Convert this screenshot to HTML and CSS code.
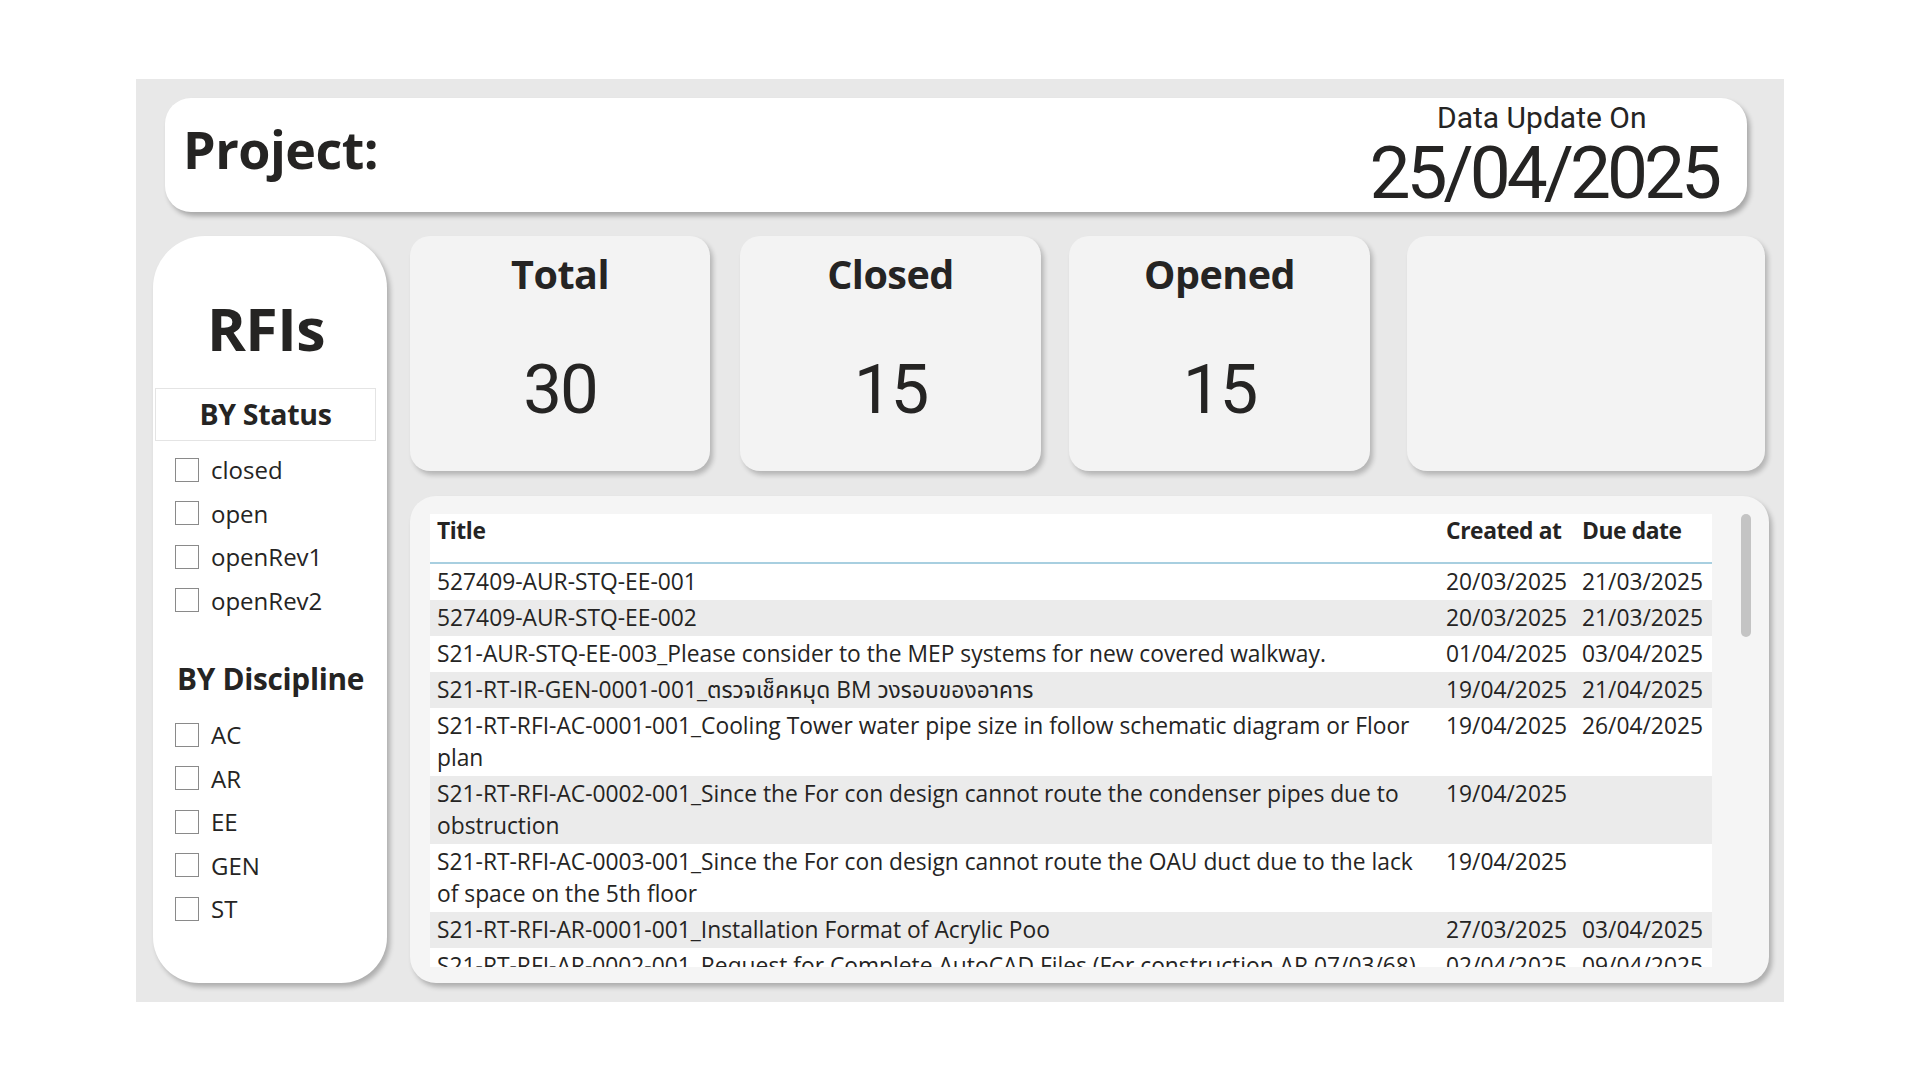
FILE: index.html
```html
<!DOCTYPE html>
<html lang="en">
<head>
<meta charset="utf-8">
<title>RFIs Dashboard</title>
<link rel="stylesheet" href="styles.css">
</head>
<body>
<div class="panel">
  <div class="header">
    <div class="project">Project:</div>
    <div class="project-field"></div>
    <div class="update">
      <div class="update-label">Data Update On</div>
      <div class="update-date">25/04/2025</div>
    </div>
  </div>
  <div class="content">
    <aside class="side">
      <div class="rfis">RFIs</div>
      <div class="status-box">BY Status</div>
      <ul class="checks">
        <li><span class="box"></span>closed</li>
        <li><span class="box"></span>open</li>
        <li><span class="box"></span>openRev1</li>
        <li><span class="box"></span>openRev2</li>
      </ul>
      <div class="disc-title">BY Discipline</div>
      <ul class="checks disc">
        <li><span class="box"></span>AC</li>
        <li><span class="box"></span>AR</li>
        <li><span class="box"></span>EE</li>
        <li><span class="box"></span>GEN</li>
        <li><span class="box"></span>ST</li>
      </ul>
    </aside>
    <main class="main">
      <div class="kpis">
        <div class="kpi kpi-total"><div class="kpi-title">Total</div><div class="kpi-num">30</div></div>
        <div class="kpi kpi-closed"><div class="kpi-title">Closed</div><div class="kpi-num">15</div></div>
        <div class="kpi kpi-opened"><div class="kpi-title">Opened</div><div class="kpi-num">15</div></div>
        <div class="kpi kpi-empty"></div>
      </div>
      <div class="table-card">
        <div class="table-view">
          <table class="rfi-table">
            <colgroup><col class="c-title"><col class="c-created"><col class="c-due"></colgroup>
            <thead>
              <tr><th>Title</th><th>Created at</th><th>Due date</th></tr>
            </thead>
            <tbody>
              <tr><td>527409-AUR-STQ-EE-001</td><td>20/03/2025</td><td>21/03/2025</td></tr>
              <tr><td>527409-AUR-STQ-EE-002</td><td>20/03/2025</td><td>21/03/2025</td></tr>
              <tr><td>S21-AUR-STQ-EE-003_Please consider to the MEP systems for new covered walkway.</td><td>01/04/2025</td><td>03/04/2025</td></tr>
              <tr><td>S21-RT-IR-GEN-0001-001_ตรวจเช็คหมุด BM วงรอบของอาคาร</td><td>19/04/2025</td><td>21/04/2025</td></tr>
              <tr><td>S21-RT-RFI-AC-0001-001_Cooling Tower water pipe size in follow schematic diagram or Floor plan</td><td>19/04/2025</td><td>26/04/2025</td></tr>
              <tr><td>S21-RT-RFI-AC-0002-001_Since the For con design cannot route the condenser pipes due to obstruction</td><td>19/04/2025</td><td></td></tr>
              <tr><td>S21-RT-RFI-AC-0003-001_Since the For con design cannot route the OAU duct due to the lack of space on the 5th floor</td><td>19/04/2025</td><td></td></tr>
              <tr><td>S21-RT-RFI-AR-0001-001_Installation Format of Acrylic Poo</td><td>27/03/2025</td><td>03/04/2025</td></tr>
              <tr><td>S21-RT-RFI-AR-0002-001_Request for Complete AutoCAD Files (For construction AR 07/03/68)</td><td>02/04/2025</td><td>09/04/2025</td></tr>
            </tbody>
          </table>
        </div>
        <div class="scroll-track"><div class="scroll-thumb"></div></div>
      </div>
    </main>
  </div>
</div>
</body>
</html>
```
FILE: styles.css
```css
* { box-sizing: border-box; }
body {
  margin: 0;
  background: #ffffff;
  font-family: "Open Sans", "Noto Sans Thai", "Noto Sans", sans-serif;
  color: #252423;
}
.panel {
  margin: 79px 0 0 136px;
  width: 1648px;
  height: 923px;
  background: #e8e8e8;
  padding-top: 19px;
}
.header {
  margin-left: 29px;
  width: 1582px;
  height: 114px;
  background: #ffffff;
  border-radius: 26px;
  box-shadow: 3px 4px 5px rgba(0, 0, 0, 0.28);
  display: flex;
  align-items: flex-start;
  padding: 0 33px 0 18px;
}
.project {
  font-weight: 700;
  font-size: 52px;
  margin-top: 20px;
  line-height: 1.2;
  letter-spacing: -0.5px;
}
.project-field { flex: 1; }
.update {
  display: flex;
  flex-direction: column;
  align-items: center;
  margin-top: 5px;
}
.update-label {
  font-family: Roboto, sans-serif;
  font-size: 30px;
  line-height: 30px;
}
.update-date {
  font-family: Roboto, sans-serif;
  font-size: 73px;
  line-height: 62px;
  letter-spacing: -4px;
  margin-top: 9px;
  margin-right: -4px;
}
.content {
  display: flex;
  margin-top: 24px;
  padding-left: 17px;
  gap: 23px;
}
.side {
  width: 234px;
  height: 747px;
  background: #ffffff;
  border-radius: 52px 52px 46px 46px;
  box-shadow: 3px 4px 5px rgba(0, 0, 0, 0.25);
  padding-top: 56px;
}
.rfis {
  text-align: center;
  font-weight: 700;
  font-size: 59px;
  line-height: 72px;
  padding-right: 8px;
  letter-spacing: -0.5px;
}
.status-box {
  margin: 24px 0 0 2px;
  width: 221px;
  height: 53px;
  border: 1px solid #e4e4e4;
  text-align: center;
  font-weight: 700;
  font-size: 28.5px;
  line-height: 51px;
  letter-spacing: -0.3px;
}
.checks {
  list-style: none;
  margin: 7px 0 0 0;
  padding: 0 0 0 22px;
}
.checks li {
  height: 43.5px;
  display: flex;
  align-items: center;
  font-size: 24px;
}
.box {
  width: 24px;
  height: 24px;
  border: 1.5px solid #8a8a8a;
  margin-right: 12px;
  flex: none;
}
.disc-title {
  margin: 35px 0 0 24px;
  font-weight: 700;
  font-size: 29.8px;
  line-height: 44px;
  letter-spacing: -0.3px;
}
.checks.disc { margin-top: 12px; }
.main {
  width: 1359px;
}
.kpis {
  display: flex;
  height: 235px;
}
.kpi {
  height: 235px;
  background: #f3f3f3;
  border-radius: 20px;
  box-shadow: 3px 4px 5px rgba(0, 0, 0, 0.22);
  text-align: center;
  padding-top: 14px;
}
.kpi-total { width: 300px; }
.kpi-closed { width: 301px; margin-left: 30px; }
.kpi-opened { width: 301px; margin-left: 28px; }
.kpi-empty { width: 358px; margin-left: 37px; }
.kpi-title {
  font-weight: 700;
  font-size: 39.5px;
  line-height: 49px;
  letter-spacing: -0.5px;
}
.kpi-num {
  font-family: Roboto, sans-serif;
  font-size: 69px;
  line-height: 69px;
  margin-top: 56px;
  letter-spacing: -2px;
}
.table-card {
  margin-top: 25px;
  width: 1359px;
  height: 487px;
  background: #f5f5f5;
  border-radius: 26px;
  box-shadow: 3px 4px 5px rgba(0, 0, 0, 0.25);
  padding: 18px 0 0 20px;
  display: flex;
}
.table-view {
  width: 1282px;
  height: 453px;
  overflow: hidden;
}
.rfi-table {
  width: 1282px;
  table-layout: fixed;
  border-collapse: collapse;
  font-size: 22.8px;
  line-height: 32px;
}
.c-title { width: 1010px; }
.c-created { width: 136px; }
.c-due { width: 136px; }
.rfi-table th {
  text-align: left;
  font-weight: 700;
  background: #ffffff;
  height: 49px;
  vertical-align: top;
  padding: 1px 0 0 6px;
  border-bottom: 2px solid #a8cfe0;
  letter-spacing: -0.4px;
}
.rfi-table th:first-child { padding-left: 7px; }
.rfi-table td {
  vertical-align: top;
  padding: 2px 0 2px 6px;
  white-space: nowrap;
}
.rfi-table td:first-child {
  padding-left: 7px;
  padding-right: 0;
  white-space: normal;
}
.rfi-table tbody tr:nth-child(odd) td { background: #ffffff; }
.rfi-table tbody tr:nth-child(even) td { background: #ebebeb; }
.scroll-track {
  margin-left: 29px;
  width: 10px;
  height: 453px;
}
.scroll-thumb {
  width: 10px;
  height: 123px;
  background: #c4c4c4;
  border-radius: 5px;
}
```
